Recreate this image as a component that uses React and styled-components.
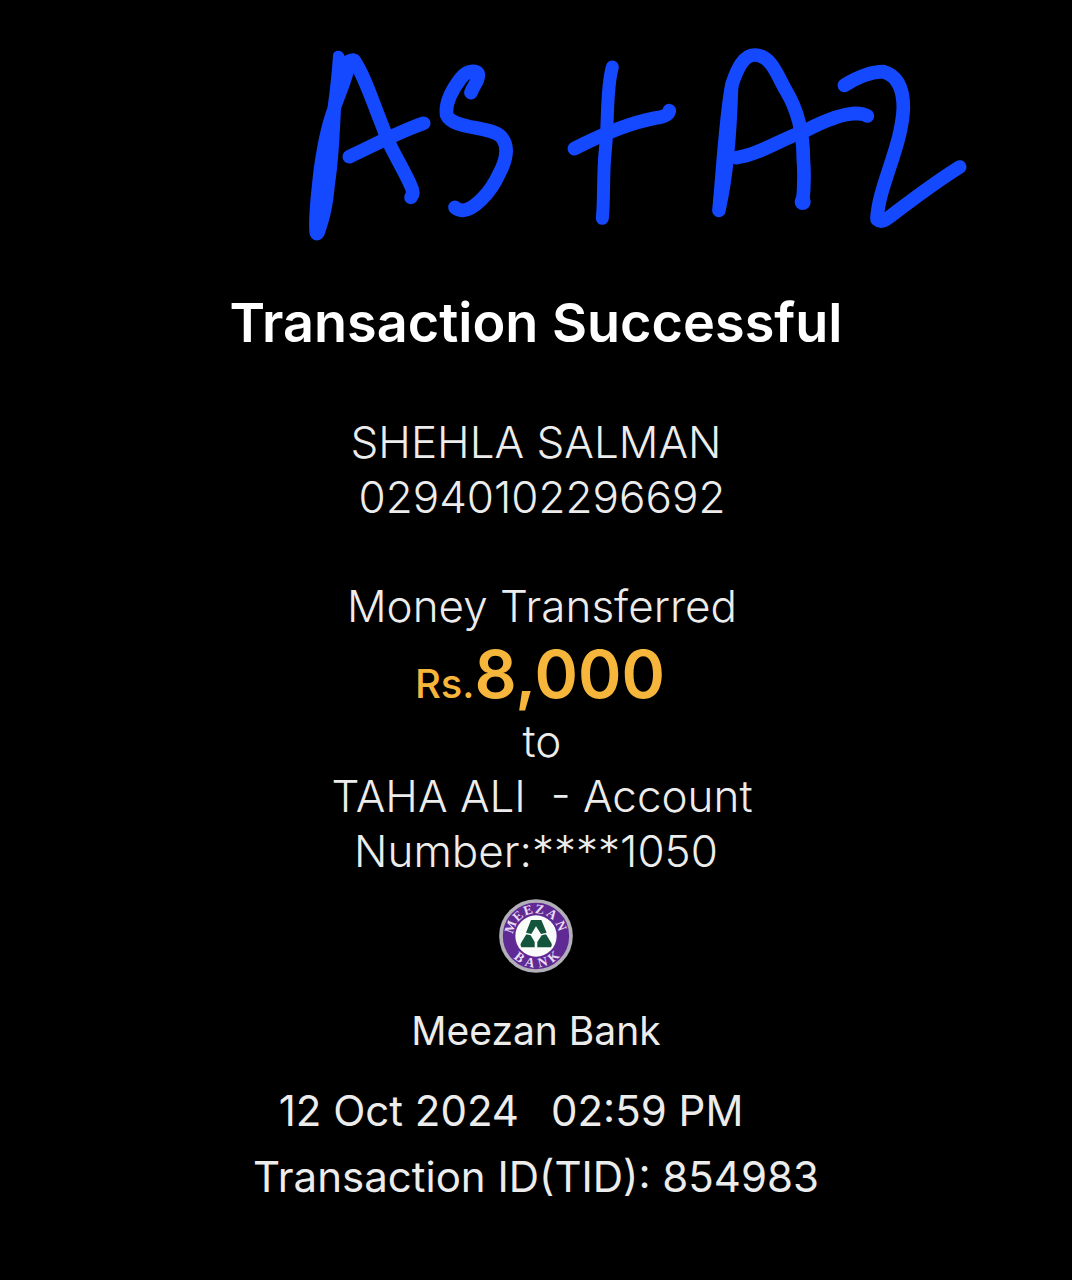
import React from "react";
import styled, { createGlobalStyle } from "styled-components";

const GlobalStyle = createGlobalStyle`
  *, *::before, *::after { box-sizing: border-box; }
  html, body { margin: 0; background: #000; }
  body {
    min-height: 100vh;
    color: #ececec;
    font-family: Inter, Roboto, "Liberation Sans", sans-serif;
  }
`;

const Page = styled.main`
  display: flex;
  flex-direction: column;
  align-items: center;
  padding: 44px 0 64px;
  text-align: center;
`;

const Note = styled.div`
  display: flex;
  justify-content: center;
  width: 100%;
  padding-left: 198px;
  svg { display: block; width: 670px; max-width: 100%; height: auto; }
`;

const Title = styled.h1`
  margin: 47px 0 60px;
  font-size: 54px;
  line-height: 64px;
  font-weight: 600;
  color: #fff;
`;

const Section = styled.section`
  display: flex;
  flex-direction: column;
  align-items: center;
  margin-bottom: ${(p) => p.$gap}px;
`;

const Line = styled.p`
  margin: 0;
  padding-left: ${(p) => (p.$indent ? 12 : 0)}px;
  font-size: 44px;
  line-height: 55px;
  font-weight: 300;
  white-space: pre-wrap;
`;

const Amount = styled.p`
  margin: 0;
  padding-left: 8px;
  font-size: 66px;
  line-height: 80px;
  font-weight: 600;
  color: #f6b63c;
`;

const Currency = styled.span`
  font-size: 40px;
  line-height: 40px;
  font-weight: 500;
`;

const Logo = styled.svg`
  display: block;
  width: 74px;
  height: 74px;
`;

const BankName = styled.p`
  margin: 34px 0 30px;
  font-size: 39px;
  line-height: 48px;
`;

const Details = styled.div`
  display: flex;
  flex-direction: column;
  align-items: center;
  gap: 14px;
`;

const Detail = styled.p`
  display: flex;
  gap: 32px;
  margin: 0;
  padding-right: ${(p) => (p.$inset ? 50 : 0)}px;
  font-size: 42px;
  line-height: 52px;
`;

function Handwriting() {
  return (
    <svg viewBox="300 44 670 200" role="img" aria-label="AS + A2">
      <g fill="none" stroke="#1549ff" strokeWidth="41" strokeLinecap="round" strokeLinejoin="round">
        <g transform="translate(290 30) scale(0.33333)">
          <path
            fill="#1549ff"
            stroke="none"
            d="M129 76C130 58 158 56 164 78C180 66 205 68 213 88L191 130C181 165 167 199 153 236C149 320 145 400 134 470C129 530 120 565 106 607C98 640 62 640 58 607C55 560 63 490 70 425C79 360 91 290 113 230C120 180 126 125 129 76Z"
          />
          <path d="M192 91C226 143 244 206 282 300C296 350 337 408 361 464Q374 488 363 502" />
          <path d="M178 380C240 352 320 308 401 280" />
          <path strokeWidth="41" d="M543 188C548 170 566 155 565 134C562 118 530 122 513 144C485 180 465 223 470 255C490 300 600 286 634 321C658 350 649 390 628 430C600 492 550 540 519 541Q503 540 495 532" />
        </g>
        <g transform="translate(550 30) scale(0.33333)">
          <path d="M187 111C168 180 176 262 166 360C158 430 163 510 157 565" strokeWidth="39" />
          <path d="M73 356C158 312 238 279 316 264Q355 260 358 242" />
          <path d="M507 541C519 420 526 270 546 163C562 115 582 75 613 75C665 74 685 144 707 180C742 238 760 314 760 386Q765 450 758 516" />
          <path strokeWidth="48" d="M758 514V516" />
          <path strokeWidth="38" d="M510 530C526 460 541 340 546 168" />
          <path d="M558 383C620 376 690 330 768 301C818 275 868 252 916 250Q940 250 952 258" />
          <path d="M883 166C930 137 965 125 1000 125C1046 138 1060 180 1060 233C1056 350 984 472 981 568Q995 580 1017 562C1085 510 1160 454 1229 411" />
        </g>
      </g>
    </svg>
  );
}

const TOP = [
  ["M", -70],
  ["E", -42],
  ["E", -17],
  ["Z", 8],
  ["A", 36],
  ["N", 68],
];
const BOTTOM = [
  ["B", 38],
  ["A", 13],
  ["N", -14],
  ["K", -40],
];

function MeezanLogo() {
  return (
    <Logo viewBox="0 0 222 222" role="img" aria-label="Meezan Bank logo">
      <circle cx="111" cy="111" r="105" fill="#5f2a93" stroke="#b3afb8" strokeWidth="11" />
      <circle cx="111" cy="111" r="62" fill="#fafcfa" />
      <g fill="#e9dcf3" fontFamily="Liberation Serif, serif" fontWeight="700" fontSize="40" textAnchor="middle">
        {TOP.map(([ch, a], i) => (
          <text key={i} transform={`rotate(${a} 111 111)`} x="111" y="43">{ch}</text>
        ))}
        {BOTTOM.map(([ch, a], i) => (
          <text key={i} transform={`rotate(${a} 111 111)`} x="111" y="205">{ch}</text>
        ))}
      </g>
      <g fill="#12543c">
        <path d="M96 63H127L143 101L126 105L111 82L97 105L81 101Z" />
        <path d="M82 106L95 109L107 129V145H67Q62 139 66 132Z" />
        <path d="M141 106L128 109L115 129V145H156Q161 139 157 132Z" />
      </g>
    </Logo>
  );
}

export default function App() {
  return (
    <>
      <GlobalStyle />
      <Page>
        <Note>
          <Handwriting />
        </Note>
        <Title>Transaction Successful</Title>
        <Section $gap={54}>
          <Line>SHEHLA SALMAN</Line>
          <Line $indent>02940102296692</Line>
        </Section>
        <Section $gap={20}>
          <Line $indent>Money Transferred</Line>
          <Amount>
            <Currency>Rs.</Currency>8,000
          </Amount>
          <Line $indent>to</Line>
          <Line $indent>{"TAHA ALI  - Account"}</Line>
          <Line>Number:****1050</Line>
        </Section>
        <MeezanLogo />
        <BankName>Meezan Bank</BankName>
        <Details>
          <Detail $inset>
            <span>12 Oct 2024</span>
            <span>02:59 PM</span>
          </Detail>
          <Detail>Transaction ID(TID): 854983</Detail>
        </Details>
      </Page>
    </>
  );
}
